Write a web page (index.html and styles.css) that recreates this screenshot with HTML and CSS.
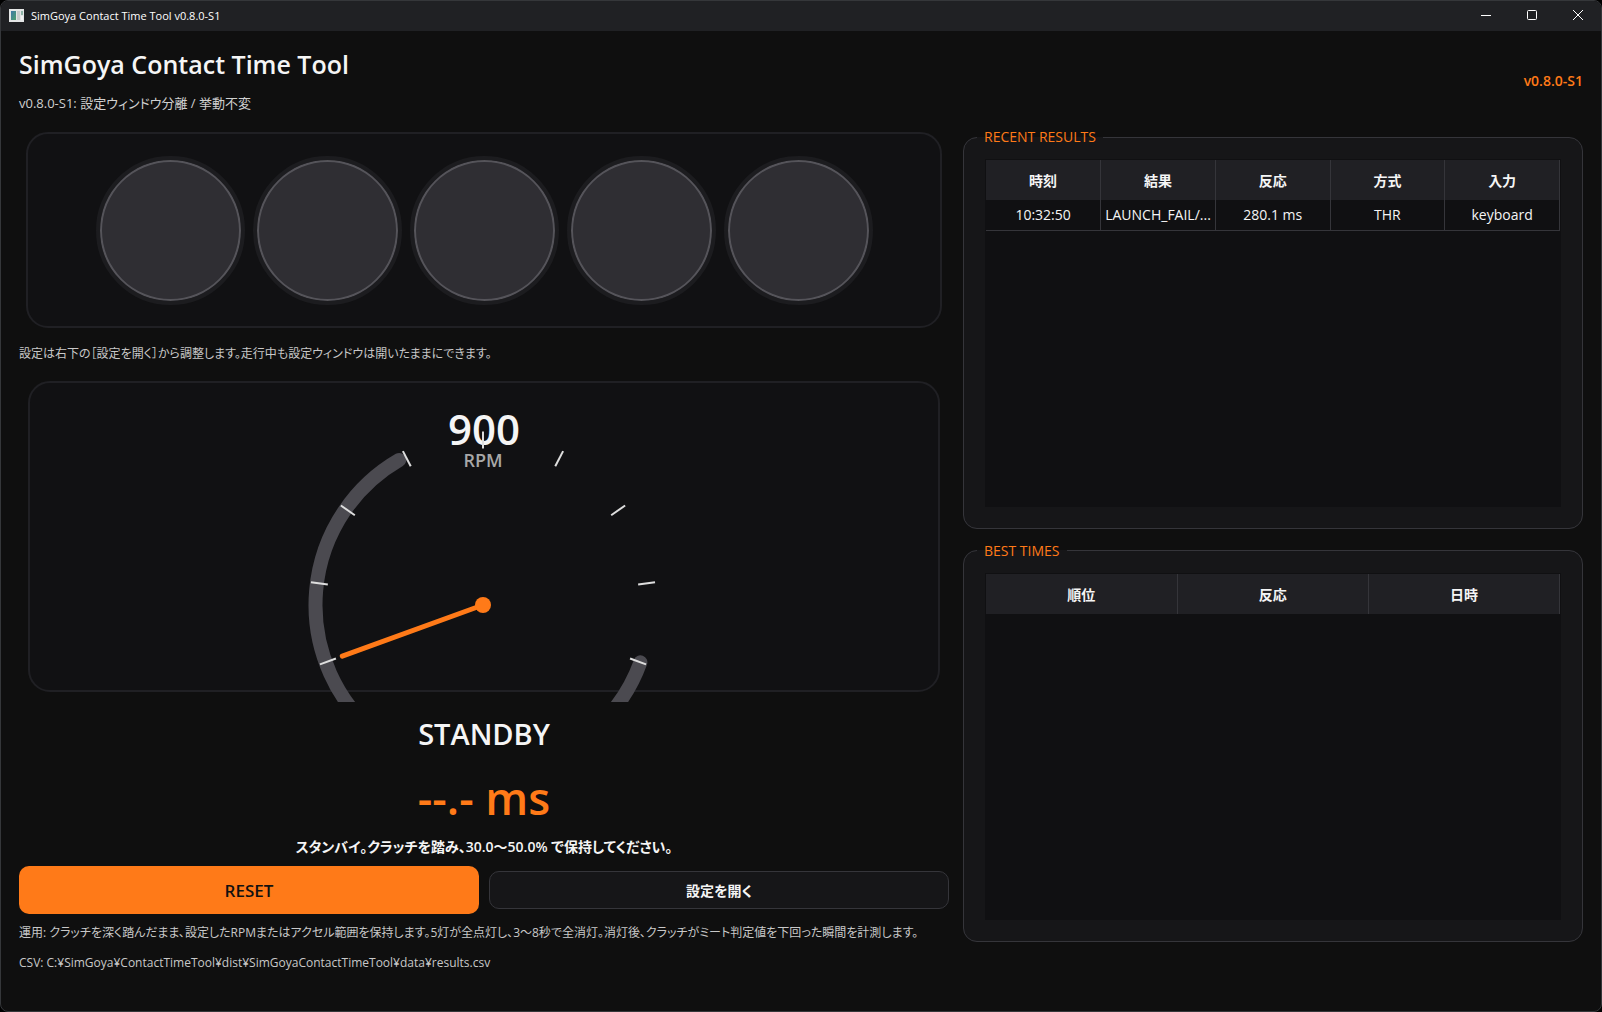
FILE: index.html
```html
<!DOCTYPE html>
<html lang="ja">
<head>
  <meta charset="UTF-8">
  <meta name="viewport" content="width=device-width, initial-scale=1.0">
  <title>SimGoya Contact Time Tool v0.8.0-S1</title>
  <link rel="stylesheet" href="styles.css">
</head>
<body>
  <div class="window">
    <div class="titlebar">
      <svg class="app-icon" width="15" height="13" viewBox="0 0 15 13" aria-hidden="true">
        <defs>
          <linearGradient id="pane" x1="0" y1="0" x2="1" y2="1">
            <stop offset="0" stop-color="#3f78a8"/>
            <stop offset="1" stop-color="#4fa06c"/>
          </linearGradient>
        </defs>
        <rect width="15" height="13" fill="#e4e6e6"/>
        <rect x="2" y="2" width="5" height="9" fill="url(#pane)"/>
        <rect x="8" y="2" width="3" height="9" fill="#c9cccc"/>
        <rect x="12" y="2" width="2" height="4" fill="#8fb5a8"/>
        <rect x="12" y="7" width="2" height="4" fill="#f4f4f4"/>
      </svg>
      <span class="titlebar-text">SimGoya Contact Time Tool v0.8.0-S1</span>
      <div class="window-buttons">
        <button class="window-button" aria-label="Minimize">
          <svg width="11" height="11" viewBox="0 0 11 11"><path d="M0 5.5h10"/></svg>
        </button>
        <button class="window-button" aria-label="Maximize">
          <svg width="11" height="11" viewBox="0 0 11 11"><rect x=".5" y=".5" width="9" height="9" rx="1"/></svg>
        </button>
        <button class="window-button" aria-label="Close">
          <svg width="11" height="11" viewBox="0 0 11 11"><path d="M0 0l10 10M10 0L0 10"/></svg>
        </button>
      </div>
    </div>

    <div class="content">
      <header class="header">
        <div>
          <h1>SimGoya Contact Time Tool</h1>
          <p class="subtitle">v0.8.0-S1: 設定ウィンドウ分離 / 挙動不変</p>
        </div>
        <span class="version">v0.8.0-S1</span>
      </header>

      <main class="main">
        <section class="left">
          <div class="lights">
            <div class="light"></div>
            <div class="light"></div>
            <div class="light"></div>
            <div class="light"></div>
            <div class="light"></div>
          </div>

          <p class="hint">設定は右下の［設定を開く］から調整します。走行中も設定ウィンドウは開いたままにできます。</p>

          <div class="gauge">
            <div class="gauge-panel"></div>
            <!-- origin is the needle hub, dial runs from 200 to -20 degrees -->
            <svg class="gauge-dial" width="400" height="330" viewBox="-199 -233 400 330">
              <text class="rpm-value" x="1" y="-160">900</text>
              <text class="rpm-unit" x="0" y="-138">RPM</text>
              <path class="arc" d="M157.4 57.3A167.5 167.5 0 1 1 -83.7 -145.1"/>
              <g class="ticks">
                <path transform="rotate(-110)" d="M0 -156.5V-173.5"/>
                <path transform="rotate(-82.5)" d="M0 -156.5V-173.5"/>
                <path transform="rotate(-55)" d="M0 -156.5V-173.5"/>
                <path transform="rotate(-27.5)" d="M0 -156.5V-173.5"/>
                <path d="M0 -156.5V-173.5"/>
                <path transform="rotate(27.5)" d="M0 -156.5V-173.5"/>
                <path transform="rotate(55)" d="M0 -156.5V-173.5"/>
                <path transform="rotate(82.5)" d="M0 -156.5V-173.5"/>
                <path transform="rotate(110)" d="M0 -156.5V-173.5"/>
              </g>
              <path class="needle" d="M0 0L-140.7 51.2"/>
              <circle class="hub" r="8"/>
            </svg>
          </div>

          <div class="state">STANDBY</div>
          <div class="time">--.- ms</div>
          <p class="message">スタンバイ。クラッチを踏み、30.0〜50.0% で保持してください。</p>

          <div class="buttons">
            <button class="btn btn-reset">RESET</button>
            <button class="btn">設定を開く</button>
          </div>

          <p class="hint">運用: クラッチを深く踏んだまま、設定したRPMまたはアクセル範囲を保持します。5灯が全点灯し、3〜8秒で全消灯。消灯後、クラッチがミート判定値を下回った瞬間を計測します。</p>
        </section>

        <section class="right">
          <fieldset class="group">
            <legend>RECENT RESULTS</legend>
            <div class="table-view">
              <table>
                <thead>
                  <tr><th>時刻</th><th>結果</th><th>反応</th><th>方式</th><th>入力</th></tr>
                </thead>
                <tbody>
                  <tr><td>10:32:50</td><td>LAUNCH_FAIL/...</td><td>280.1 ms</td><td>THR</td><td>keyboard</td></tr>
                </tbody>
              </table>
            </div>
          </fieldset>

          <fieldset class="group">
            <legend>BEST TIMES</legend>
            <div class="table-view">
              <table>
                <thead>
                  <tr><th>順位</th><th>反応</th><th>日時</th></tr>
                </thead>
                <tbody></tbody>
              </table>
            </div>
          </fieldset>
        </section>
      </main>

      <footer class="hint">CSV: C:¥SimGoya¥ContactTimeTool¥dist¥SimGoyaContactTimeTool¥data¥results.csv</footer>
    </div>
  </div>
</body>
</html>
```

FILE: styles.css
```css
* {
  box-sizing: border-box;
}
body {
  font-family: "Open Sans", "Noto Sans CJK JP", sans-serif;
  font-size: 14px;
  font-feature-settings: "palt";
  background-color: #000;
  color: #f5f5f5;
  margin: 0;
}
h1, p {
  margin: 0;
}
button {
  font-family: inherit;
  font-feature-settings: inherit;
  color: inherit;
  cursor: pointer;
}
.window {
  display: flex;
  flex-direction: column;
  min-height: 100vh;
  background-color: #0f0f0f;
  border: 1px solid #35373a;
  border-radius: 8px;
  overflow: hidden;
}
.titlebar {
  display: flex;
  align-items: center;
  height: 30px;
  padding: 0 0 2px 8px;
  background-color: #202124;
}
.titlebar-text {
  margin-left: 7px;
  font-size: 11px;
  color: #fff;
}
.window-buttons {
  display: flex;
  margin-left: auto;
}
.window-button {
  display: flex;
  align-items: center;
  justify-content: center;
  width: 46px;
  height: 28px;
  padding: 0;
  background: none;
  border: none;
}
.window-button svg {
  fill: none;
  stroke: #fff;
}
.content {
  flex: 1;
  padding: 16px 18px 18px;
}
.header {
  display: flex;
  align-items: center;
  justify-content: space-between;
  height: 66px;
}
h1 {
  font-size: 25px;
  font-weight: 600;
  line-height: 34px;
}
.subtitle {
  margin-top: 12px;
  font-size: 13px;
  line-height: 20px;
  color: #d0d0d0;
}
.version {
  font-size: 14px;
  font-weight: 600;
  color: #ff7a18;
}
.main {
  display: grid;
  grid-template-columns: 3fr 2fr;
  gap: 14px;
  margin-top: 10px;
}
.left {
  display: flex;
  flex-direction: column;
}
.lights {
  display: flex;
  justify-content: center;
  align-items: center;
  gap: 8px;
  height: 196px;
  margin: 9px 7px 17px;
  background-color: #111113;
  border: 2px solid #202024;
  border-radius: 22px;
}
.light {
  width: 149px;
  height: 149px;
  background-color: #2f2e33;
  border: 4px solid #1c1c1f;
  border-radius: 50%;
  box-shadow: inset 0 0 0 2px #55545a;
}
.hint {
  font-size: 12px;
  line-height: 18px;
  color: #c8c8c8;
}
.gauge {
  display: grid;
  margin-top: 9px;
}
.gauge-panel {
  grid-area: 1 / 1;
  margin: 9px 9px 10px;
  background-color: #111113;
  border: 2px solid #202024;
  border-radius: 22px;
}
.gauge-dial {
  grid-area: 1 / 1;
  justify-self: center;
}
.rpm-value, .rpm-unit {
  text-anchor: middle;
  font-weight: 600;
}
.rpm-value {
  font-size: 42px;
  fill: #f5f5f5;
}
.rpm-unit {
  font-size: 18px;
  fill: #a8a8a8;
}
.arc {
  fill: none;
  stroke: #4b4a50;
  stroke-width: 14;
  stroke-linecap: round;
}
.ticks {
  stroke: #dedede;
  stroke-width: 2;
}
.needle {
  stroke: #ff7a18;
  stroke-width: 5;
  stroke-linecap: round;
}
.hub {
  fill: #ff7a18;
}
.state {
  margin-top: 12px;
  font-size: 29px;
  font-weight: 600;
  line-height: 40px;
  text-align: center;
}
.time {
  margin-top: 14px;
  font-size: 45px;
  font-weight: 600;
  line-height: 60px;
  text-align: center;
  color: #ff7a18;
}
.message {
  margin-top: 9px;
  font-size: 14px;
  font-weight: 600;
  line-height: 20px;
  text-align: center;
}
.buttons {
  display: grid;
  grid-template-columns: 1fr 1fr;
  align-items: center;
  gap: 10px;
  margin: 9px 0 10px;
}
.btn {
  height: 38px;
  background-color: #161618;
  border: 1px solid #35353a;
  border-radius: 10px;
  font-size: 14px;
  font-weight: 600;
}
.btn-reset {
  height: 48px;
  background-color: #ff7a18;
  border: none;
  color: #111;
  font-size: 17px;
}
.right {
  display: flex;
  flex-direction: column;
  gap: 13px;
  padding-top: 5px;
}
.group {
  display: flex;
  flex: 1;
  flex-direction: column;
  min-width: 0;
  margin: 0;
  padding: 13px 21px 21px;
  background-color: #161618;
  border: 1px solid #35353a;
  border-radius: 14px;
}
legend {
  margin-left: -8px;
  padding: 0 7px;
  font-weight: 500;
  line-height: 18px;
  color: #ff7a18;
}
.table-view {
  flex: 1;
  padding: 1px;
  background-color: #101012;
}
table {
  width: 100%;
  table-layout: fixed;
  border-collapse: collapse;
}
th, td {
  padding: 0 3px;
  border-right: 1px solid #35353a;
  text-align: center;
  white-space: nowrap;
  overflow: hidden;
}
th {
  height: 40px;
  background-color: #202024;
  font-weight: 600;
}
td {
  height: 30px;
  border-bottom: 1px solid #35353a;
}
footer.hint {
  margin-top: 12px;
}
```
